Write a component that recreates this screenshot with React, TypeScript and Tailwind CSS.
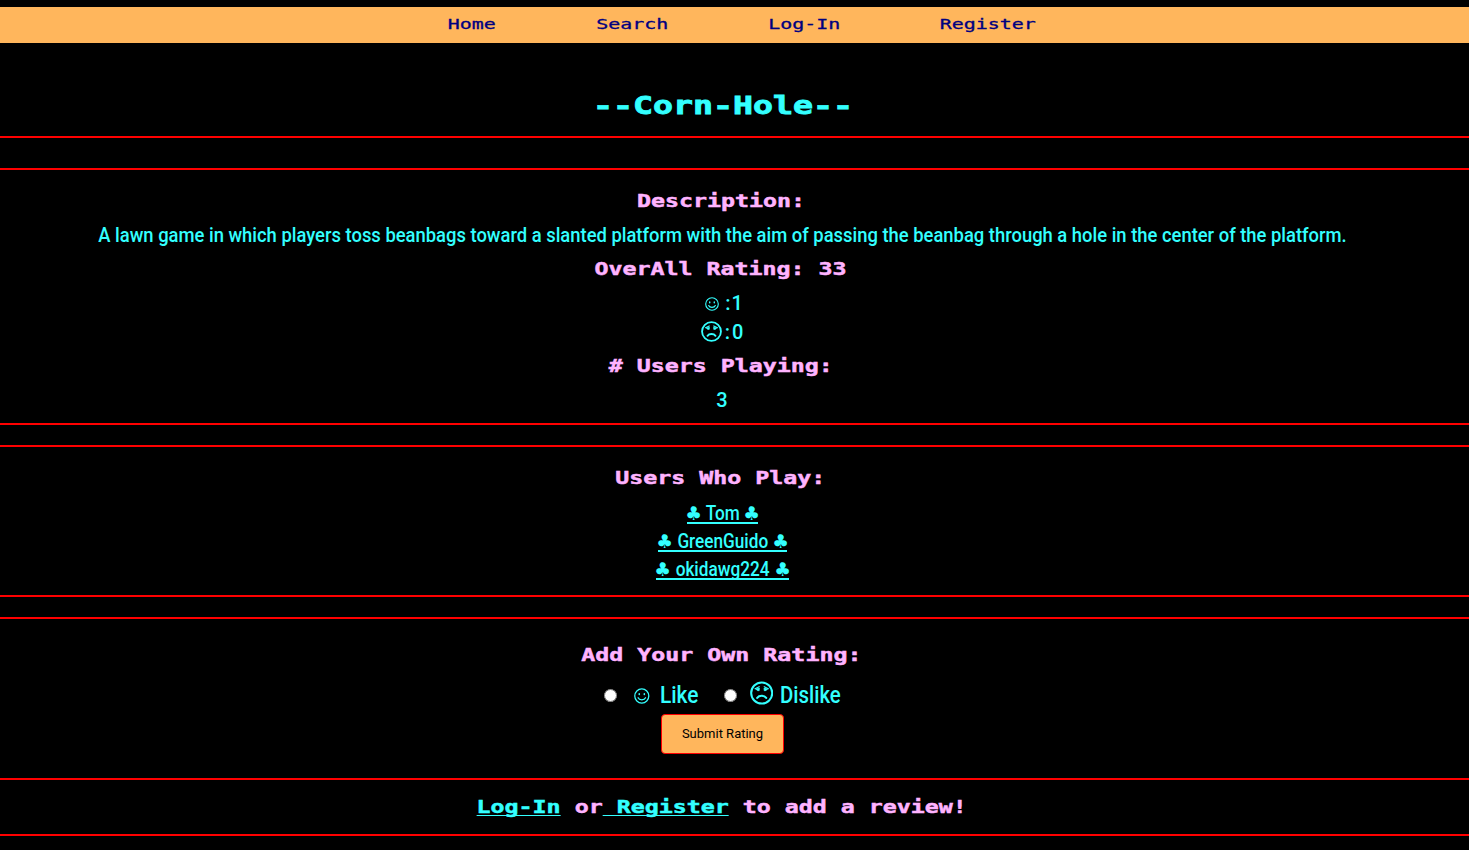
import type { ReactNode } from "react";

function Rule() {
  return <div className="h-0.5 w-full shrink-0 bg-[#ff0000]" />;
}

function Heading({ children, className = "" }: { children: ReactNode; className?: string }) {
  return (
    <h3 className={`flex h-6 items-center justify-center pr-[27px] ${className}`}>
      <span className="inline-block scale-x-[1.292] whitespace-pre font-['DejaVu_Sans_Mono',monospace] text-[18px] leading-6 font-bold text-[#ffb3ff] [-webkit-text-stroke:0.5px_#ffb3ff]">
        {children}
      </span>
    </h3>
  );
}

function Narrow({ children, className = "" }: { children: ReactNode; className?: string }) {
  return (
    <span className={`inline-block whitespace-pre font-[Roboto,sans-serif] font-medium ${className}`}>{children}</span>
  );
}

function Smile({ className }: { className: string }) {
  return (
    <svg viewBox="0 0 16 16" className={className} fill="none" stroke="#33ffff" strokeWidth="1.3" strokeLinecap="round">
      <circle cx="8" cy="8" r="7.2" />
      <path d="M5.4 5.6v.9M10.6 5.6v.9" strokeWidth="1.6" />
      <path d="M4.2 9.8c1.2 2.8 6.4 2.8 7.6 0" />
    </svg>
  );
}

function Frown({ className }: { className: string }) {
  return (
    <svg viewBox="0 0 24 24" className={className} fill="none" stroke="#33ffff" strokeWidth="2.1" strokeLinecap="round">
      <circle cx="12" cy="12" r="10.8" />
      <path d="M5.2 7.6 9.4 5.6M14.6 5.6l4.2 2" strokeWidth="1.3" />
      <path d="M6.2 8 9.6 7 9.4 9.6Q7.2 10.4 6.2 8ZM17.8 8 14.4 7 14.6 9.6Q16.8 10.4 17.8 8Z" fill="#33ffff" strokeWidth="0.8" />
      <path d="M7.4 17c2-2.8 7.2-2.8 9.2 0" />
    </svg>
  );
}

function NavItem({ children, className }: { children: ReactNode; className: string }) {
  return (
    <a href="#" className={`flex justify-center ${className}`}>
      <span className="scale-x-[1.424] font-['DejaVu_Sans_Mono',monospace] text-[14px] leading-5 text-[#000080] [-webkit-text-stroke:0.3px_#000080]">
        {children}
      </span>
    </a>
  );
}

function Club() {
  return <span className="flex w-[13px] shrink-0 justify-center font-['DejaVu_Sans',sans-serif] text-[19px] leading-[18px]">♣</span>;
}

function Player({ name, width }: { name: string; width: string }) {
  return (
    <a href="#" className={`flex h-[22px] items-end justify-between border-b-2 border-[#33ffff] ${width}`}>
      <Club />
      <span className="flex min-w-0 flex-1 justify-center">
        <Narrow className="translate-y-px scale-x-[0.86] text-[20px] leading-5">{name}</Narrow>
      </span>
      <Club />
    </a>
  );
}

export default function App() {
  return (
    <div className="flex h-[850px] w-full flex-col overflow-hidden bg-black pt-[7px] text-[#33ffff]">
      <nav className="flex h-9 shrink-0 items-center gap-[100px] bg-[#ffb65c] pb-0.5 pl-[448px]">
        <NavItem className="w-12">Home</NavItem>
        <NavItem className="w-[72px]">Search</NavItem>
        <NavItem className="w-[72px]">Log-In</NavItem>
        <NavItem className="w-24">Register</NavItem>
      </nav>

      <h1 className="flex h-[93px] shrink-0 items-center justify-center pt-[33px] pr-[24px]">
        <span className="scale-x-[1.384] font-['DejaVu_Sans_Mono',monospace] text-[24px] leading-8 font-bold [-webkit-text-stroke:0.8px_#33ffff]">
          --Corn-Hole--
        </span>
      </h1>
      <Rule />
      <div className="h-[30px] shrink-0" />
      <Rule />

      <section className="flex h-[253px] shrink-0 flex-col pt-[19px]">
        <Heading>Description:</Heading>
        <p className="mt-[10px] flex h-6 items-center justify-center pr-[25px]">
          <Narrow className="scale-x-[0.92] text-[20px] leading-6">
            A lawn game in which players toss beanbags toward a slanted platform with the aim of passing the beanbag through a hole in the center of the platform.
          </Narrow>
        </p>
        <Heading className="mt-[10px]">OverAll Rating: 33</Heading>
        <div className="mt-[10px] flex h-6 items-center justify-center gap-1.5 pr-[20px]">
          <Smile className="mt-0.5 size-[14px]" />
          <Narrow className="text-[20px] leading-6 tracking-[1px]">:1</Narrow>
        </div>
        <div className="mt-[5px] flex h-6 items-center justify-center gap-[3px] pr-[23px]">
          <Frown className="-mt-0.5 size-[21px]" />
          <Narrow className="text-[20px] leading-6 tracking-[2px]">:0</Narrow>
        </div>
        <Heading className="mt-[10px]"># Users Playing:</Heading>
        <div className="mt-[10px] flex h-6 items-center justify-center pr-[25px]">
          <Narrow className="text-[20px] leading-6">3</Narrow>
        </div>
      </section>
      <Rule />
      <div className="h-5 shrink-0" />
      <Rule />

      <section className="flex h-[148px] shrink-0 flex-col pt-[19px]">
        <Heading className="pr-[29px]">Users Who Play:</Heading>
        <div className="mt-3 flex flex-col items-center gap-1.5 pr-[24px]">
          <Player name="Tom" width="w-[71px]" />
          <Player name="GreenGuido" width="w-[129px]" />
          <Player name="okidawg224" width="w-[133px]" />
        </div>
      </section>
      <Rule />
      <div className="h-5 shrink-0" />
      <Rule />

      <section className="flex h-[159px] shrink-0 flex-col pt-[24px]">
        <Heading>Add Your Own Rating:</Heading>
        <form className="flex flex-col items-center pr-[24px]">
          <div className="mt-[15px] flex h-[26px] w-[237px] items-center">
            <input type="radio" name="rating" className="size-[13px]" />
            <Smile className="mt-0.5 ml-[17px] size-4" />
            <Narrow className="ml-[10px] w-[39px] origin-left scale-x-[0.87] text-[24px] leading-7">Like</Narrow>
            <input type="radio" name="rating" className="ml-[25px] size-[13px]" />
            <Frown className="-mt-1 ml-[13px] size-6" />
            <Narrow className="ml-[7px] w-[61px] origin-left scale-x-[0.85] text-[24px] leading-7">Dislike</Narrow>
          </div>
          <button type="button" className="mt-[6px] flex h-10 w-[123px] items-center justify-center rounded-[4px] border border-[#ff0000] bg-[#ffb65c]">
            <span className="font-[Roboto,sans-serif] text-[13px] whitespace-nowrap text-black">Submit Rating</span>
          </button>
        </form>
      </section>
      <Rule />
      <div className="flex h-[54px] shrink-0 items-center justify-center pr-[26px]">
        <p className="scale-x-[1.292] font-['DejaVu_Sans_Mono',monospace] text-[18px] leading-6 font-bold whitespace-pre text-[#ffb3ff] [-webkit-text-stroke:0.5px_currentColor]">
          <a href="#" className="text-[#33ffff] underline decoration-1 underline-offset-2 [text-decoration-skip-ink:none] [-webkit-text-stroke:0.5px_#33ffff]">Log-In</a>
          {" or"}
          <a href="#" className="text-[#33ffff] underline decoration-1 underline-offset-2 [text-decoration-skip-ink:none] [-webkit-text-stroke:0.5px_#33ffff]">{" Register"}</a>
          {" to add a review!"}
        </p>
      </div>
      <Rule />
    </div>
  );
}
